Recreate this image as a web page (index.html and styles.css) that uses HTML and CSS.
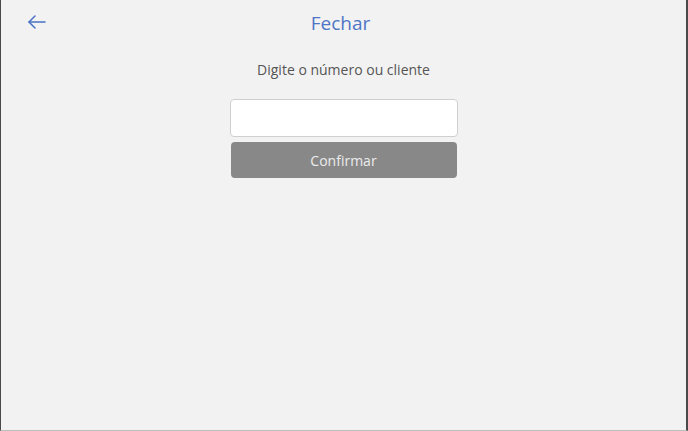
FILE: index.html
```html
<!DOCTYPE html>
<html lang="pt">
<head>
<meta charset="utf-8">
<link rel="stylesheet" href="styles.css">
</head>
<body>
<div class="frame">
  <header class="top">
    <button class="back" aria-label="Voltar">
      <svg width="18" height="14" viewBox="0 0 18 14" fill="none" stroke="#4a72c4" stroke-width="1.5" stroke-linecap="round" stroke-linejoin="round">
        <path d="M7 1 L1 7 L7 13"/>
        <path d="M1 7 H17"/>
      </svg>
    </button>
    <h1 class="title">Fechar</h1>
  </header>
  <main class="content">
    <p class="prompt">Digite o número ou cliente</p>
    <input class="field" type="text">
    <button class="confirm">Confirmar</button>
  </main>
</div>
</body>
</html>
```
FILE: styles.css
```css
html, body {
  margin: 0;
  padding: 0;
  width: 688px;
  height: 431px;
  overflow: hidden;
}
body {
  font-family: "Open Sans", "Noto Sans", sans-serif;
  background: #f2f2f2;
}
.frame {
  box-sizing: border-box;
  width: 688px;
  height: 431px;
  background: #f2f2f2;
  border-left: 1px solid #4a4a4a;
  border-right: 2px solid #4a4a4a;
  border-bottom: 1px solid #bdbdbd;
  display: flex;
  flex-direction: column;
}
.top {
  position: relative;
  height: 48px;
  display: flex;
  justify-content: center;
}
.back {
  position: absolute;
  left: 27px;
  top: 15px;
  padding: 0;
  border: 0;
  background: none;
  display: flex;
}
.title {
  margin: 11px 0 0 -6px;
  font-size: 19px;
  font-weight: 400;
  color: #4f75c6;
  line-height: 24px;
}
.content {
  display: flex;
  flex-direction: column;
  align-items: center;
}
.prompt {
  margin: 12px 0 0 0;
  font-size: 14px;
  line-height: 20px;
  color: #555;
}
.field {
  box-sizing: border-box;
  margin-top: 19px;
  width: 228px;
  height: 38px;
  border: 1px solid #cfcfcf;
  border-radius: 4px;
  background: #fff;
  outline: none;
}
.confirm {
  margin-top: 5px;
  width: 226px;
  height: 36px;
  border: 0;
  border-radius: 4px;
  background: #888888;
  color: #ececec;
  font-family: inherit;
  font-size: 14px;
}
```
